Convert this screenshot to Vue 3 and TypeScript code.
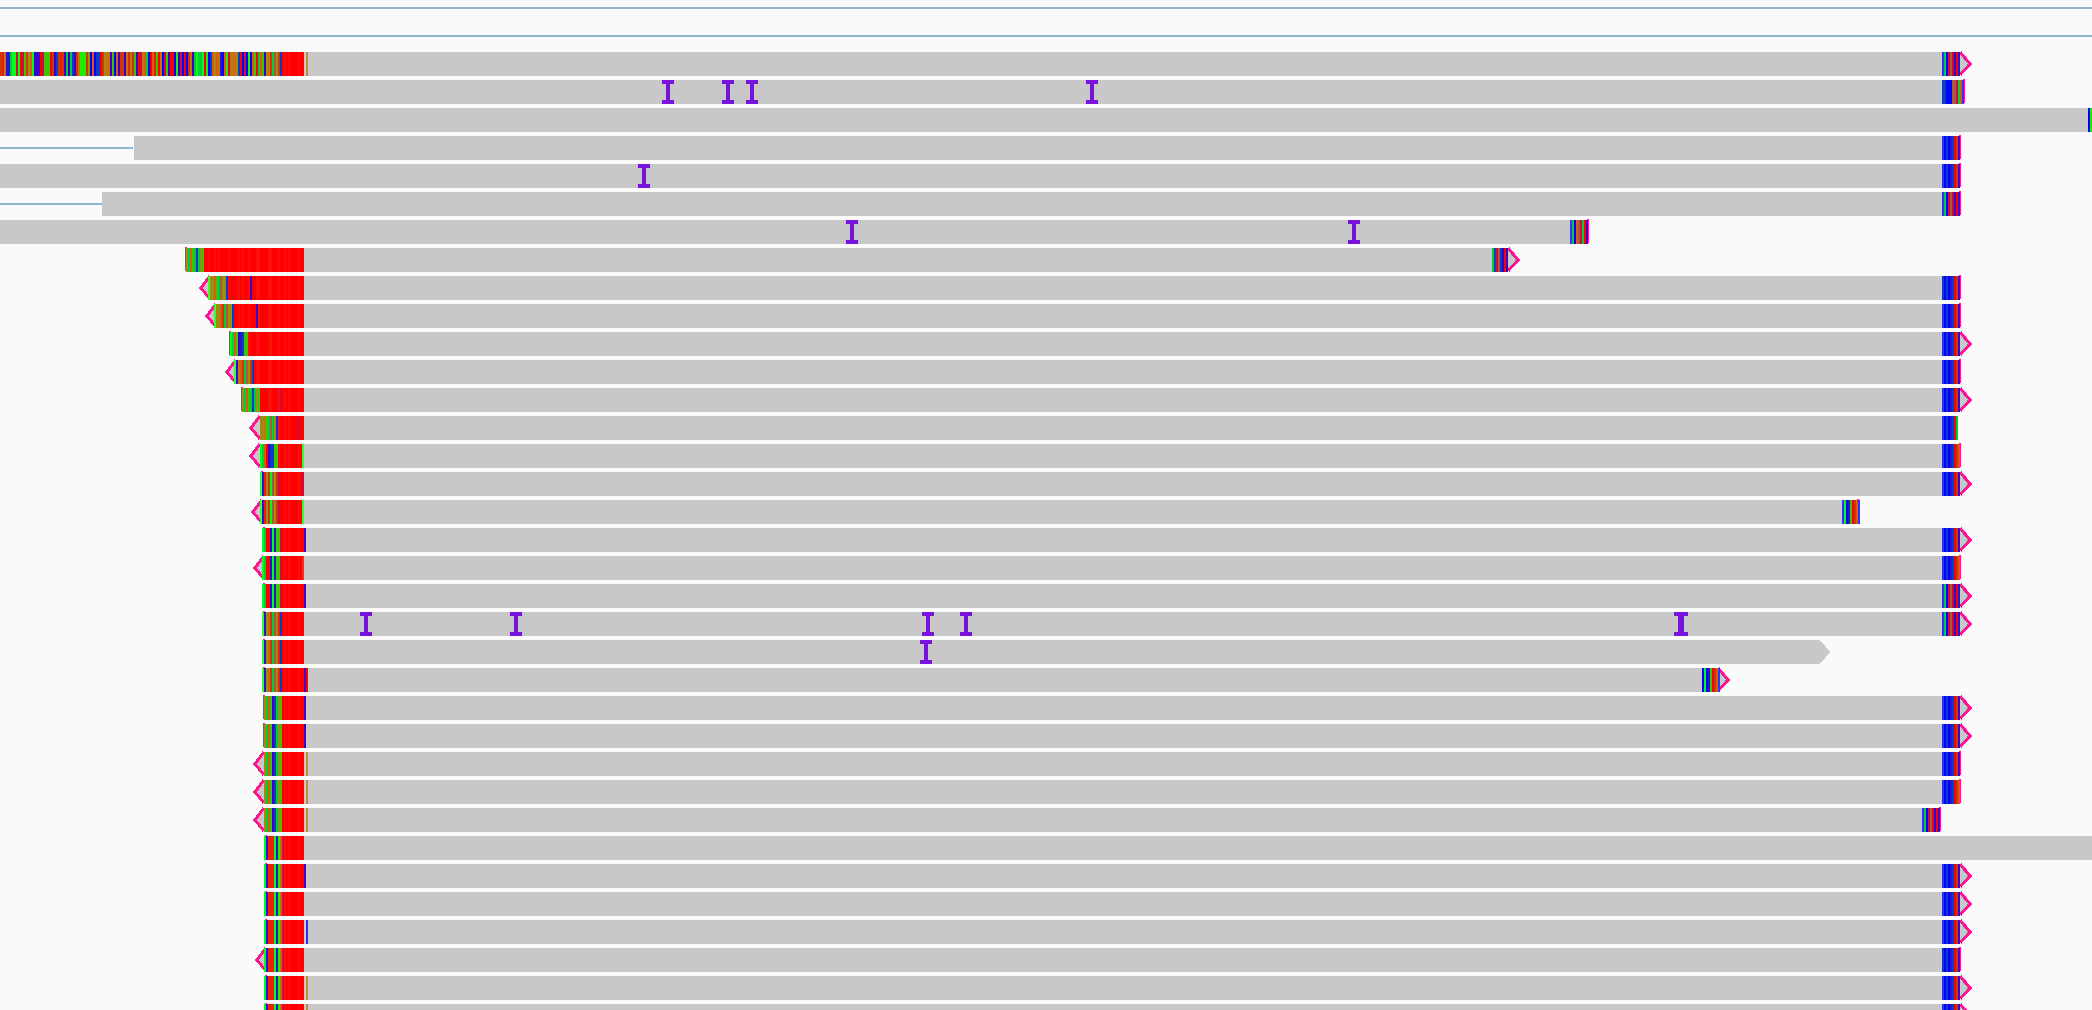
<script setup lang="ts">
interface Read {
  from: number
  to?: number
  link?: number
  leftTip?: number
  leftCap?: number
  left?: string
  leftAt?: number
  right?: string
  rightAt?: number
  rightTip?: number
  rightCap?: number
  plainArrow?: boolean
  marks?: [number, string][]
  inserts?: number[]
  wideInsert?: number
}

const colours: Record<string, string> = {
  r: '#ff0000', R: '#ff0c0c', s: '#ff2828', e: '#f01e00', d: '#cc3706', O: '#dc5a0a', o: '#c87010',
  k: '#a08c10', t: '#aa5a3c', c: '#cc0c3c', l: '#3cc800', G: '#1eee00', L: '#00ff14',
  V: '#33ff33', g: '#00cc3c', n: '#0a3ccc', b: '#0000ff', v: '#3232ff', a: '#2814d2',
  p: '#3c00c8', w: '#d08830',
}

const clipEnd = 304
const matchEnd = 1942

const topStrip = [
  'deoaagLLcL', 'rcldkOLppp', 'rclllrdpnd', 'edpgpgnpdo', 'GGGdkbObnn',
  'rdkooplbOp', 'ddpododlpr', 'coOgbrOelr', 'obclprrbGp', 'cbrbdopgLg',
  'gLrGbnOkOo', 'abOGcoookn', 'rbcbGbOlrg', 'Olpkodgtkd', 'n',
].join('')

const A = 'vbnbanrdp'
const B = 'vgbctcpra'
const C = 'vbnbanrdO'
const tri = (right = A) => ({ to: 1960, right, rightTip: 1971 })
const cap = (right = A) => ({ to: 1960, right, rightCap: 1960 })

const s15 = 'VaekdLtkdc'
const s17 = 'LgrraLallc'
const s20 = 'Vakodgtken'
const s23 = 'kgOlpngkl'
const s28 = 'LaeeeLaGOc'

const reads: Read[] = [
  { from: 0, leftAt: 0, left: topStrip, marks: [[306, 'w']], ...tri(B) },
  { from: 0, to: 1964, right: 'nnbbbttcgOv', rightCap: 1964, inserts: [668, 728, 752, 1092] },
  { from: 0, marks: [[2088, 'b'], [2090, 'G']] },
  { from: 134, link: 133, ...cap() },
  { from: 0, ...cap(), inserts: [644] },
  { from: 102, link: 102, ...cap(B) },
  { from: 0, to: 1588, rightAt: 1570, right: 'vgbOtcgrp', rightCap: 1588, inserts: [852, 1354] },
  { from: 186, left: 'kgOlgngkl', leftCap: 185, to: 1508, rightAt: 1492, right: 'gnctnprp', rightTip: 1519 },
  { from: 210, leftAt: 208, left: 'VkkOlgtkkn', leftTip: 200, marks: [[250, 'p']], ...cap('nbnbanrdp') },
  { from: 216, leftAt: 214, left: 'VkkOdgtkkn', leftTip: 206, marks: [[256, 'p']], ...cap() },
  { from: 230, left: 'LgOlpanll', leftCap: 229, marks: [[270, 'e']], ...tri() },
  { from: 236, leftAt: 234, left: 'VaoOdgtkdn', leftTip: 226, ...cap() },
  { from: 242, left: 'kgOlgngkl', leftCap: 241, marks: [[280, 'c']], ...tri() },
  { from: 260, left: 'kkolgtgkn', leftTip: 250, marks: [[298, 'c']], to: 1958, right: 'vbnbanrg' },
  { from: 260, left: 'LgOrpnnll', leftTip: 250, marks: [[302, 'V']], ...cap(C) },
  { from: 262, leftAt: 260, left: s15, leftCap: 261, marks: [[302, 'c']], ...tri() },
  { from: 262, leftAt: 260, left: s15, leftTip: 252, marks: [[302, 'V']], to: 1860, rightAt: 1842, right: 'vLbalrdOv', rightCap: 1858 },
  { from: 264, leftAt: 262, left: s17, leftCap: 263, marks: [[304, 'p']], ...tri() },
  { from: 264, leftAt: 262, left: s17, leftTip: 254, marks: [[302, 's']], ...cap(C) },
  { from: 264, leftAt: 262, left: s17, leftCap: 263, marks: [[304, 'p']], ...tri(B) },
  { from: 264, leftAt: 262, left: s20, leftCap: 263, ...tri(B), inserts: [366, 516, 928, 966], wideInsert: 1674 },
  { from: 264, leftAt: 262, left: s20, leftCap: 263, to: 1820, rightTip: 1830, plainArrow: true, inserts: [926] },
  { from: 264, leftAt: 262, left: s20, leftCap: 263, marks: [[304, 'p'], [306, 'r']], to: 1718, rightAt: 1702, right: 'bLbalrdOv', rightTip: 1729 },
  { from: 264, left: s23, leftCap: 263, marks: [[304, 'p']], ...tri() },
  { from: 264, left: s23, leftCap: 263, marks: [[304, 'p']], ...tri() },
  { from: 264, left: s23, leftTip: 254, marks: [[306, 'w']], ...cap() },
  { from: 264, left: s23, leftTip: 254, marks: [[306, 'w']], ...cap(C) },
  { from: 264, left: s23, leftTip: 254, marks: [[306, 'w']], to: 1940, rightAt: 1922, right: B, rightCap: 1940 },
  { from: 266, leftAt: 264, left: s28, leftCap: 265 },
  { from: 266, leftAt: 264, left: s28, leftCap: 265, marks: [[304, 'p']], ...tri() },
  { from: 266, leftAt: 264, left: s28, leftCap: 265, ...tri() },
  { from: 266, leftAt: 264, left: s28, leftCap: 265, marks: [[306, 'v']], ...tri() },
  { from: 266, leftAt: 264, left: s28, leftTip: 256, ...cap('nbnbanrdp') },
  { from: 266, leftAt: 264, left: s28, leftCap: 265, marks: [[306, 'w']], ...tri() },
  { from: 266, leftAt: 264, left: s28, leftCap: 265, marks: [[306, 'w']], ...tri() },
]

// Expands base codes into 2px stripes; clipped poly-T tails run up to clipEnd.
function stripes(read: Read): [number, string][] {
  const out: [number, string][] = []
  if (read.left) {
    const start = read.leftAt ?? read.from
    const count = (clipEnd - start) / 2
    for (let i = 0; i < count; i++) {
      const x = start + i * 2
      out.push([x, read.left[i] ?? (x % 10 === 8 || x % 14 === 4 ? 'R' : 'r')])
    }
  }
  if (read.right) {
    const start = read.rightAt ?? matchEnd
    for (let i = 0; i < read.right.length; i++) out.push([start + i * 2, read.right[i]])
  }
  return out.concat(read.marks ?? [])
}
</script>

<template>
  <main class="track">
    <div v-for="n in 2" :key="n" class="row gap"></div>
    <svg v-for="(read, i) in reads" :key="i" class="row" shape-rendering="crispEdges">
      <rect v-if="read.link" class="link" x="0" y="11" :width="read.link" height="2" />
      <rect v-if="read.to" class="body" :x="read.from" y="0" :width="read.to - read.from" height="24" />
      <rect v-else class="body" :x="read.from" y="0" width="100%" height="24" />
      <template v-if="read.leftTip">
        <polygon class="body" :points="`${read.from},0 ${read.leftTip},12 ${read.from},24`" />
        <polyline class="clip" :points="`${read.from},0 ${read.leftTip + 1},12 ${read.from},23`" />
      </template>
      <template v-if="read.rightTip && read.to">
        <polygon class="body" :points="`${read.to},0 ${read.rightTip},12 ${read.to},24`" />
        <polyline v-if="!read.plainArrow" class="clip" :points="`${read.to},0 ${read.rightTip - 1},12 ${read.to},23`" />
      </template>
      <rect v-if="read.leftCap" class="cap" :x="read.leftCap" y="-1" width="2" height="24" />
      <rect v-if="read.rightCap" class="cap" :x="read.rightCap - 1" y="-1" width="2" height="24" />
      <rect v-for="([x, code], j) in stripes(read)" :key="j" :x="x" y="0" width="2" height="24" :fill="colours[code]" />
      <path v-for="x in read.inserts" :key="x" class="insert" :d="`M${x - 6} 0h12v4h-4v16h4v4h-12v-4h4v-16h-4z`" />
      <path v-if="read.wideInsert" class="insert" :d="`M${read.wideInsert} 0h14v4h-4v16h4v4h-14v-4h4v-16h-4z`" />
    </svg>
  </main>
</template>

<style>
body {
  background: #fafafa;
}
</style>

<style scoped>
.track {
  display: flex;
  flex-direction: column;
  gap: 4px;
  height: 100vh;
  overflow: hidden;
  background: #fafafa;
}
.row {
  display: block;
  flex: none;
  width: 100%;
  height: 24px;
  overflow: visible;
}
.row:first-child {
  margin-top: -4px;
}
.gap {
  background: linear-gradient(#92b4c8, #92b4c8) 0 11px / 100% 2px no-repeat;
}
.body {
  fill: #c8c8c8;
}
.link {
  fill: #92b4c8;
}
.clip {
  fill: none;
  stroke: #ff1493;
  stroke-width: 3px;
}
.cap {
  fill: #ff1493;
}
.insert {
  fill: #7614dc;
}
</style>
